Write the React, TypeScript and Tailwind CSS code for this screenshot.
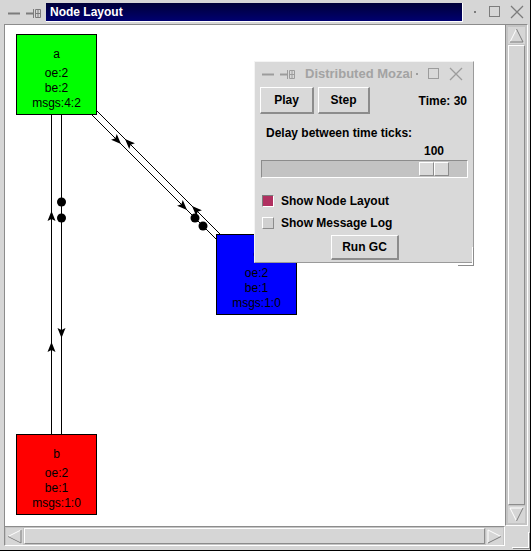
import React from 'react';

const font = "font-['Liberation_Sans',Arial,sans-serif]";
const raised = 'border border-t-white border-l-white border-r-[#8c8c8c] border-b-[#8c8c8c]';
const button =
  'flex items-center justify-center border-t border-l border-r-2 border-b-2 border-t-white border-l-white border-r-[#8c8c8c] border-b-[#8c8c8c] bg-[#d9d9d9] text-[12px] font-bold text-black';

// window manager decorations
const LeftIcons = ({ c }: { c: string }) => (
  <svg width="46" height="22" viewBox="0 0 46 22" className="shrink-0">
    <path d="M8 11.5H20" stroke={c} strokeWidth="2" />
    <path d="M26 11.5H33" stroke={c} strokeWidth="2" />
    <path d="M33.5 7v9" stroke={c} />
    <path d="M35.5 7.5h5v8h-5z M38 8v7 M36 11.5h4" stroke={c} fill="none" />
  </svg>
);

const RightIcons = ({ c, gap }: { c: string; gap: number }) => (
  <div className="flex items-center">
    <div className="h-[2px] w-[2px]" style={{ background: c }} />
    <svg width="14" height="14" viewBox="0 0 14 14" style={{ marginLeft: gap }}>
      <rect x="1.5" y="1.5" width="10" height="10" fill="none" stroke={c} />
    </svg>
    <svg width="14" height="14" viewBox="0 0 14 14" className="ml-[8px]">
      <path d="M1 1L13 13M13 1L1 13" stroke={c} strokeWidth="1.3" />
    </svg>
  </div>
);

const ArrowBtn = ({ dir }: { dir: 'up' | 'down' | 'left' | 'right' }) => {
  const tri = {
    up: ['M2 15L8.5 2', 'M8.5 2L15 15L2 15'],
    down: ['M2 2L15 2M2 2L8.5 15', 'M8.5 15L15 2'],
    left: ['M15 2L2 8.5L15 15', 'M15 2L15 15M2 8.5L15 15'],
    right: ['M2 2L15 8.5M2 2L2 15', 'M15 8.5L2 15'],
  }[dir];
  return (
    <svg width="17" height="17" viewBox="0 0 17 17" className="shrink-0">
      <rect x="0" y="0" width="17" height="17" fill="#d6d6d6" />
      <path d={tri[0]} stroke="#ffffff" fill="none" />
      <path d={tri[1]} stroke="#7c7c7c" fill="none" />
    </svg>
  );
};

const VScroll = () => (
  <div className="flex flex-col border border-t-[#8c8c8c] border-l-[#8c8c8c] border-r-white border-b-white bg-[#c4c4c4] p-[2px]">
    <ArrowBtn dir="up" />
    <div className={`my-[1px] flex-1 ${raised} bg-[#d6d6d6]`} />
    <ArrowBtn dir="down" />
  </div>
);

const HScroll = () => (
  <div className="flex border border-t-[#8c8c8c] border-l-[#8c8c8c] border-r-white border-b-white bg-[#c4c4c4] p-[1px]">
    <ArrowBtn dir="left" />
    <div className={`mx-[1px] flex-1 ${raised} bg-[#d6d6d6]`} />
    <ArrowBtn dir="right" />
  </div>
);

interface Node {
  label: string;
  lines: string[];
  x: number;
  y: number;
  color: string;
}

const nodes: Node[] = [
  { label: 'a', lines: ['oe:2', 'be:2', 'msgs:4:2'], x: 16, y: 34, color: 'bg-[#00ff00]' },
  { label: 'b', lines: ['oe:2', 'be:1', 'msgs:1:0'], x: 16, y: 434, color: 'bg-[#ff0000]' },
  { label: 'c', lines: ['oe:2', 'be:1', 'msgs:1:0'], x: 216, y: 234, color: 'bg-[#0000ff]' },
];

// Tk style arrowhead, shape {8 10 3}
const arrow = (x: number, y: number, dx: number, dy: number) => {
  const l = Math.hypot(dx, dy);
  const ux = dx / l;
  const uy = dy / l;
  const nx = -uy;
  const ny = ux;
  const pts = [
    [x, y],
    [x - 10 * ux + 4 * nx, y - 10 * uy + 4 * ny],
    [x - 8 * ux, y - 8 * uy],
    [x - 10 * ux - 4 * nx, y - 10 * uy - 4 * ny],
  ];
  return pts.map(p => p.join(',')).join(' ');
};

const arrows: [number, number, number, number][] = [
  [51.5, 211, 0, -1],
  [51.5, 342, 0, -1],
  [61.5, 338, 0, 1],
  [121, 144, 1, 1],
  [187, 210, 1, 1],
  [125, 139, -1, -1],
  [192, 206, -1, -1],
];

const dots: [number, number][] = [
  [61.5, 202],
  [61.5, 218],
  [195, 218],
  [203, 226],
];

const Canvas = () => (
  <div className="relative overflow-hidden border-l border-t border-[#8c8c8c] bg-white">
    <svg className="absolute left-0 top-0" width="500" height="501" viewBox="5 25 500 501">
      <g stroke="#000" shapeRendering="crispEdges">
        <line x1="51.5" y1="114" x2="51.5" y2="434" />
        <line x1="61.5" y1="114" x2="61.5" y2="434" />
        <line x1="92" y1="115" x2="216" y2="239" />
        <line x1="96" y1="110" x2="220" y2="234" />
      </g>
      {arrows.map(([x, y, dx, dy], i) => (
        <polygon key={i} points={arrow(x, y, dx, dy)} fill="#000" />
      ))}
      {dots.map(([x, y], i) => (
        <circle key={i} cx={x} cy={y} r="4.5" fill="#000" />
      ))}
    </svg>
    {nodes.map(n => (
      <div
        key={n.label}
        className={`absolute flex h-[81px] w-[81px] flex-col items-center border border-black pt-[12px] text-[12px] leading-[15px] text-black ${n.color}`}
        style={{ left: n.x - 5, top: n.y - 25 }}
      >
        <div className="mb-[4px]">{n.label}</div>
        {n.lines.map((t, i) => (
          <div key={i}>{t}</div>
        ))}
      </div>
    ))}
  </div>
);

const Dialog = () => (
  <div className="absolute left-[254px] top-[61px] flex h-[202px] w-[220px] flex-col border border-t-[#f4f4f4] border-l-[#f4f4f4] border-r-[#9a9a9a] border-b-[#9a9a9a] bg-[#d9d9d9]">
    {/* title bar, inactive */}
    <div className="flex h-[23px] items-center">
      <div className="-ml-[1px] w-[47px]">
        <LeftIcons c="#9c9c9c" />
      </div>
      <div className="w-[111px] overflow-hidden whitespace-nowrap pl-[4px] text-[13px] font-bold text-[#a3a3a3]">
        Distributed Mozart
      </div>
      <div className="ml-[4px]">
        <RightIcons c="#9c9c9c" gap={9} />
      </div>
    </div>

    <div className="flex flex-col pl-[5px]">
      <div className="mt-[2px] flex items-center">
        <div className={`${button} h-[27px] w-[54px]`}>Play</div>
        <div className={`${button} ml-[4px] h-[27px] w-[52px]`}>Step</div>
        <div className="ml-auto pr-[6px] text-[12px] font-bold">Time: 30</div>
      </div>
      <div className="mt-[12px] pl-[6px] text-[12px] font-bold leading-[15px]">Delay between time ticks:</div>
      <div className="mt-[3px] ml-[159px] w-[30px] text-center text-[12px] font-bold leading-[15px]">100</div>
      <div className="ml-[1px] mt-[1px] flex h-[18px] w-[207px] items-center border border-t-[#8c8c8c] border-l-[#8c8c8c] border-r-white border-b-white bg-[#c3c3c3] pl-[157px]">
        <div className={`h-[14px] w-[15px] ${raised} bg-[#d9d9d9]`} />
        <div className={`h-[14px] w-[15px] ${raised} bg-[#d9d9d9]`} />
      </div>
      <div className="mt-[12px] flex h-[22px] items-center">
        <div className="ml-[2px] h-[12px] w-[12px] border border-t-[#7c7c7c] border-l-[#7c7c7c] border-r-white border-b-white bg-[#b03060]" />
        <div className="ml-[7px] text-[12px] font-bold">Show Node Layout</div>
      </div>
      <div className="flex h-[22px] items-center">
        <div className={`ml-[2px] h-[12px] w-[12px] ${raised} bg-[#d0d0d0]`} />
        <div className="ml-[7px] text-[12px] font-bold">Show Message Log</div>
      </div>
      <div className={`${button} ml-[71px] mt-[1px] h-[25px] w-[68px]`}>Run GC</div>
    </div>
  </div>
);

export default function App() {
  return (
    <div className={`relative h-[551px] w-[531px] overflow-hidden border-b border-r border-black bg-[#d6d6d6] ${font}`}>
      {/* main title bar */}
      <div className="flex h-[24px] items-start pt-[3px]">
        <div className="-mt-[1px]">
          <LeftIcons c="#7c7c7c" />
        </div>
        <div className="flex h-[19px] w-[417px] items-center border-b border-r border-white bg-gradient-to-b from-[#000038] to-[#000070] pl-[4px] text-[12px] font-bold text-white">
          Node Layout
        </div>
        <div className="ml-[11px] mt-[2px]">
          <RightIcons c="#7c7c7c" gap={12} />
        </div>
      </div>

      <div className="grid grid-cols-[501px_23px] grid-rows-[502px_20px] pl-[4px]">
        <Canvas />
        <VScroll />
        <HScroll />
        <div />
      </div>

      <Dialog />

      {/* resize corner marks */}
      <div className="absolute left-[457px] top-[247px] h-[18px] w-[16px] border-b border-r border-white shadow-[1px_1px_0_#8c8c8c]" />
      <div className="absolute left-[512px] top-[532px] h-[16px] w-[17px] border-b border-r border-white shadow-[1px_1px_0_#8c8c8c]" />
    </div>
  );
}
